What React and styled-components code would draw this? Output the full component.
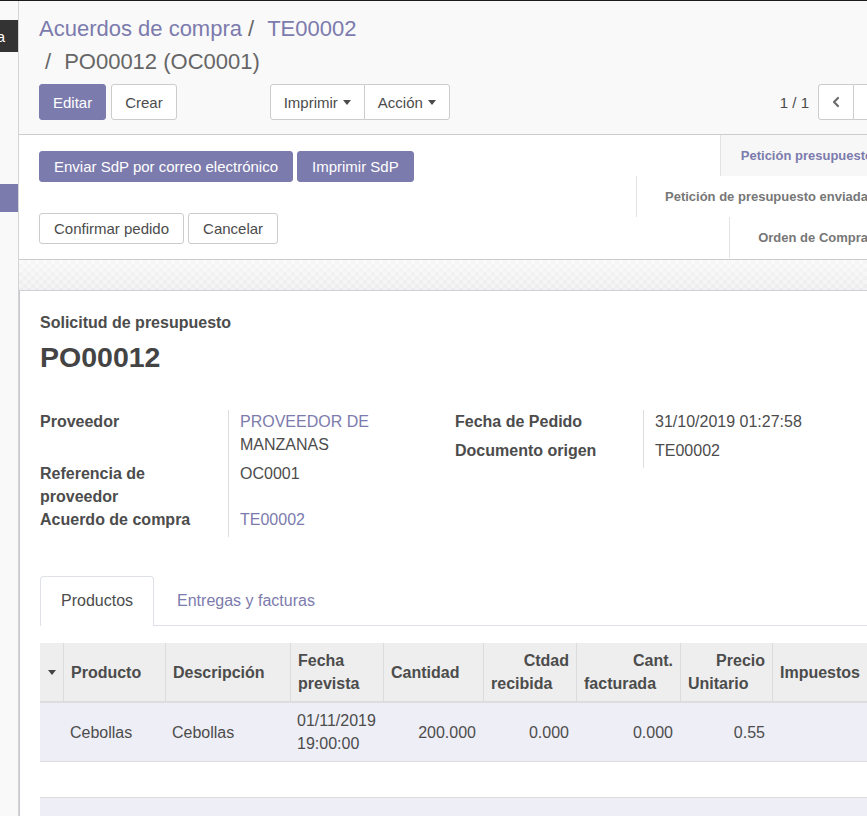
import React from 'react';
import styled, { createGlobalStyle, css } from 'styled-components';
import { ChevronLeft, ChevronRight } from 'lucide-react';

const PURPLE = '#7c7bad';
const TEXT = '#4c4c4c';
const COLS = '23px 102px 125px 93px 100px 93px 104px 92px 120px 110px';

const GlobalStyle = createGlobalStyle`
  html, body { margin: 0; padding: 0; overflow: hidden; background: #fff; }
  body { font-family: "Liberation Sans", Arial, sans-serif; color: ${TEXT}; }
  * { box-sizing: border-box; }
`;

const Page = styled.div`
  display: flex;
  width: 905px;
  height: 816px;
  border-top: 1px solid #1a1a1a;
`;

const Sidebar = styled.aside`
  flex: 0 0 19px;
  width: 19px;
  min-width: 0;
  overflow: hidden;
  display: flex;
  flex-direction: column;
  padding-top: 19px;
  background: #f9f9f9;
  border-right: 1px solid #d4d4d4;
`;

const SideTab = styled.div`
  height: 32px;
  display: flex;
  align-items: center;
  justify-content: flex-end;
  padding-right: 13px;
  overflow: hidden;
  white-space: nowrap;
  background: #333;
  color: #fff;
  font-size: 15px;
`;

const SideMark = styled.div`
  margin-top: 132px;
  height: 28px;
  background: ${PURPLE};
`;

const Main = styled.main`
  flex: 1;
  min-width: 0;
  display: flex;
  flex-direction: column;
`;

const ControlPanel = styled.header`
  display: flex;
  flex-direction: column;
  gap: 6px;
  padding: 11px 16px 14px 20px;
  background: #f9f9f9;
  border-bottom: 1px solid #ccc;
`;

const Breadcrumb = styled.nav`
  width: 50%;
  display: flex;
  flex-wrap: wrap;
  font-size: 22px;
  line-height: 33px;
  white-space: nowrap;
`;

const Crumb = styled.span`
  color: ${(p) => (p.$active ? '#666' : PURPLE)};
`;

const Sep = styled.span`
  color: #666;
  margin: 0 13px 0 6px;
`;

const ActionRow = styled.div`
  display: flex;
  align-items: center;
`;

const Btn = styled.button`
  height: ${(p) => (p.$small ? '31px' : '36px')};
  display: inline-flex;
  align-items: center;
  padding: 0 ${(p) => (p.$small ? 14 : 13)}px;
  font: 15px "Liberation Sans", Arial, sans-serif;
  border-radius: 3px;
  border: 1px solid ${(p) => (p.$primary ? PURPLE : '#ccc')};
  background: ${(p) => (p.$primary ? PURPLE : '#fff')};
  color: ${(p) => (p.$primary ? '#fff' : TEXT)};
  white-space: nowrap;
`;

const BtnPair = styled.div`
  display: flex;
  gap: 5px;
`;

const Group = styled.div`
  display: flex;
  margin-left: ${(p) => p.$offset || 0}px;
  & > button { border-radius: 0; }
  & > button + button { margin-left: -1px; }
  & > button:first-child { border-radius: 3px 0 0 3px; }
  & > button:last-child { border-radius: 0 3px 3px 0; }
`;

const Caret = styled.span`
  display: inline-block;
  margin-left: 5px;
  width: 0;
  height: 0;
  border-left: 4px solid transparent;
  border-right: 4px solid transparent;
  border-top: 5px solid ${TEXT};
`;

const Pager = styled.div`
  margin-left: auto;
  display: flex;
  align-items: center;
  gap: 9px;
  font-size: 15px;
`;

const PagerBtn = styled.button`
  width: 36px;
  height: 36px;
  display: flex;
  align-items: center;
  justify-content: center;
  padding: 0;
  background: #fff;
  border: 1px solid #ccc;
  color: #6b6b6b;
`;

const StatusBar = styled.section`
  height: 125px;
  display: flex;
  justify-content: space-between;
  padding-left: 20px;
  background: #fff;
  border-bottom: 1px solid #ccc;
`;

const SbButtons = styled.div`
  flex: 0 0 400px;
  display: flex;
  flex-wrap: wrap;
  align-content: space-around;
  column-gap: 4px;
`;

const SbStatus = styled.div`
  display: flex;
  flex-direction: column;
  align-items: flex-end;
  padding-right: 17px;
`;

const StatusItem = styled.div`
  height: 41px;
  display: flex;
  align-items: center;
  padding: 0 20px 0 28px;
  border-left: 1px solid #e3e3e3;
  font-size: 13px;
  font-weight: bold;
  color: #777;
  white-space: nowrap;
  ${(p) =>
    p.$active &&
    css`
      padding: 0 15px 0 20px;
      background: #f7f7f7;
      color: ${PURPLE};
    `}
`;

const SheetBg = styled.div`
  height: 31px;
  border-bottom: 1px solid #d0d0d8;
  background:
    linear-gradient(to bottom, rgba(255, 255, 255, 0.4), rgba(0, 0, 0, 0.02)),
    repeating-conic-gradient(#f1f1f1 0% 25%, #f8f8f8 0% 50%) 0 0 / 8px 8px;
`;

const Sheet = styled.article`
  flex: 1;
  min-height: 0;
  overflow: hidden;
  padding: 20px 0 0 20px;
  background: #fff;
  border-left: 1px solid #c8c8cf;
`;

const Subtitle = styled.div`
  font-size: 16px;
  line-height: 24px;
  font-weight: bold;
`;

const Name = styled.h1`
  margin: 5px 0 0;
  font-size: 28.5px;
  line-height: 34px;
  font-weight: bold;
  color: #444;
`;

const Groups = styled.div`
  margin-top: 36px;
  display: grid;
  grid-template-columns: 415px 415px;
  align-items: start;
`;

const FieldGroup = styled.div`
  display: grid;
  grid-template-columns: 188px 1fr;
`;

const Label = styled.div`
  padding-right: 16px;
  font-size: 16px;
  line-height: 23px;
  font-weight: bold;
`;

const Value = styled.div`
  padding: 0 0 6px 11px;
  border-left: 1px solid #ddd;
  font-size: 16px;
  line-height: 23px;
`;

const Line = styled.span`
  display: block;
  color: ${(p) => (p.$link ? PURPLE : TEXT)};
`;

const Tabs = styled.div`
  margin-top: 39px;
  display: flex;
  gap: 2px;
  border-bottom: 1px solid #dee2e6;
`;

const Tab = styled.div`
  margin-bottom: -1px;
  padding: 12px 20px 13px;
  font-size: 16px;
  line-height: 24px;
  border: 1px solid transparent;
  border-bottom: none;
  border-radius: 4px 4px 0 0;
  color: ${PURPLE};
  ${(p) =>
    p.$active &&
    css`
      border-color: #dee2e6;
      background: #fff;
      color: ${TEXT};
    `}
`;

const Table = styled.div`
  margin-top: 17px;
  width: max-content;
`;

const HeadRow = styled.div`
  display: grid;
  grid-template-columns: ${COLS};
  background: #eee;
  border-bottom: 2px solid #ddd;
`;

const HeadCell = styled.div`
  min-height: 58px;
  display: flex;
  flex-direction: column;
  justify-content: center;
  padding: 6px 7px;
  font-size: 16px;
  line-height: 23px;
  font-weight: bold;
  & + & { border-left: 1px solid #dcdcdc; }
`;

const HeadLine = styled.span`
  text-align: ${(p) => (p.$right ? 'right' : 'left')};
  white-space: nowrap;
`;

const SortCaret = styled.span`
  align-self: center;
  width: 0;
  height: 0;
  border-left: 4px solid transparent;
  border-right: 4px solid transparent;
  border-top: 5px solid #444;
`;

const BodyRow = styled.div`
  display: grid;
  grid-template-columns: ${COLS};
  background: #eeeef6;
  border-bottom: 1px solid #ddd;
`;

const Cell = styled.div`
  min-height: 58px;
  display: flex;
  flex-direction: column;
  justify-content: center;
  padding: 6px 7px;
  font-size: 16px;
  line-height: 23px;
  text-align: ${(p) => (p.$num ? 'right' : 'left')};
  white-space: nowrap;
`;

const EmptyRow = styled.div`
  height: 35px;
`;

const FootRow = styled.div`
  height: 40px;
  background: #eeeef6;
  border-top: 1px solid #ddd;
`;

const headers = [
  { lines: ['Producto'] },
  { lines: ['Descripción'] },
  { lines: ['Fecha', 'prevista'] },
  { lines: ['Cantidad'] },
  { lines: ['Ctdad', 'recibida'], split: true },
  { lines: ['Cant.', 'facturada'], split: true },
  { lines: ['Precio', 'Unitario'], split: true },
  { lines: ['Impuestos'] },
  { lines: ['Subtotal'], split: true },
];

const row = [
  { lines: ['Cebollas'] },
  { lines: ['Cebollas'] },
  { lines: ['01/11/2019', '19:00:00'] },
  { lines: ['200.000'], num: true },
  { lines: ['0.000'], num: true },
  { lines: ['0.000'], num: true },
  { lines: ['0.55'], num: true },
  { lines: [''] },
  { lines: ['110.00'], num: true },
];

export default function App() {
  return (
    <>
      <GlobalStyle />
      <Page>
        <Sidebar>
          <SideTab>Compra</SideTab>
          <SideMark />
        </Sidebar>
        <Main>
          <ControlPanel>
            <Breadcrumb>
              <Crumb>Acuerdos de compra</Crumb>
              <span>
                <Sep>/</Sep>
                <Crumb>TE00002</Crumb>
              </span>
              <span>
                <Sep>/</Sep>
                <Crumb $active>PO00012 (OC0001)</Crumb>
              </span>
            </Breadcrumb>
            <ActionRow>
              <BtnPair>
                <Btn $primary>Editar</Btn>
                <Btn>Crear</Btn>
              </BtnPair>
              <Group $offset={93}>
                <Btn>
                  Imprimir
                  <Caret />
                </Btn>
                <Btn>
                  Acción
                  <Caret />
                </Btn>
              </Group>
              <Pager>
                <span>1 / 1</span>
                <Group>
                  <PagerBtn aria-label="Anterior">
                    <ChevronLeft size={16} strokeWidth={3.2} />
                  </PagerBtn>
                  <PagerBtn aria-label="Siguiente">
                    <ChevronRight size={16} strokeWidth={3.2} />
                  </PagerBtn>
                </Group>
              </Pager>
            </ActionRow>
          </ControlPanel>

          <StatusBar>
            <SbButtons>
              <Btn $primary $small>Enviar SdP por correo electrónico</Btn>
              <Btn $primary $small>Imprimir SdP</Btn>
              <Btn $small>Confirmar pedido</Btn>
              <Btn $small>Cancelar</Btn>
            </SbButtons>
            <SbStatus>
              <StatusItem $active>Petición presupuesto</StatusItem>
              <StatusItem>Petición de presupuesto enviada</StatusItem>
              <StatusItem>Orden de Compra</StatusItem>
            </SbStatus>
          </StatusBar>

          <SheetBg />

          <Sheet>
            <Subtitle>Solicitud de presupuesto</Subtitle>
            <Name>PO00012</Name>

            <Groups>
              <FieldGroup>
                <Label>Proveedor</Label>
                <Value>
                  <Line $link>PROVEEDOR DE</Line>
                  <Line>MANZANAS</Line>
                </Value>
                <Label>Referencia de proveedor</Label>
                <Value>OC0001</Value>
                <Label>Acuerdo de compra</Label>
                <Value>
                  <Line $link>TE00002</Line>
                </Value>
              </FieldGroup>
              <FieldGroup>
                <Label>Fecha de Pedido</Label>
                <Value>31/10/2019 01:27:58</Value>
                <Label>Documento origen</Label>
                <Value>TE00002</Value>
              </FieldGroup>
            </Groups>

            <Tabs>
              <Tab $active>Productos</Tab>
              <Tab>Entregas y facturas</Tab>
            </Tabs>

            <Table>
              <HeadRow>
                <HeadCell>
                  <SortCaret />
                </HeadCell>
                {headers.map((h, i) => (
                  <HeadCell key={i}>
                    {h.lines.map((l, j) => (
                      <HeadLine key={j} $right={h.split && j === 0}>
                        {l}
                      </HeadLine>
                    ))}
                  </HeadCell>
                ))}
              </HeadRow>
              <BodyRow>
                <Cell />
                {row.map((c, i) => (
                  <Cell key={i} $num={c.num}>
                    {c.lines.map((l, j) => (
                      <span key={j}>{l}</span>
                    ))}
                  </Cell>
                ))}
              </BodyRow>
              <EmptyRow />
              <FootRow />
            </Table>
          </Sheet>
        </Main>
      </Page>
    </>
  );
}
